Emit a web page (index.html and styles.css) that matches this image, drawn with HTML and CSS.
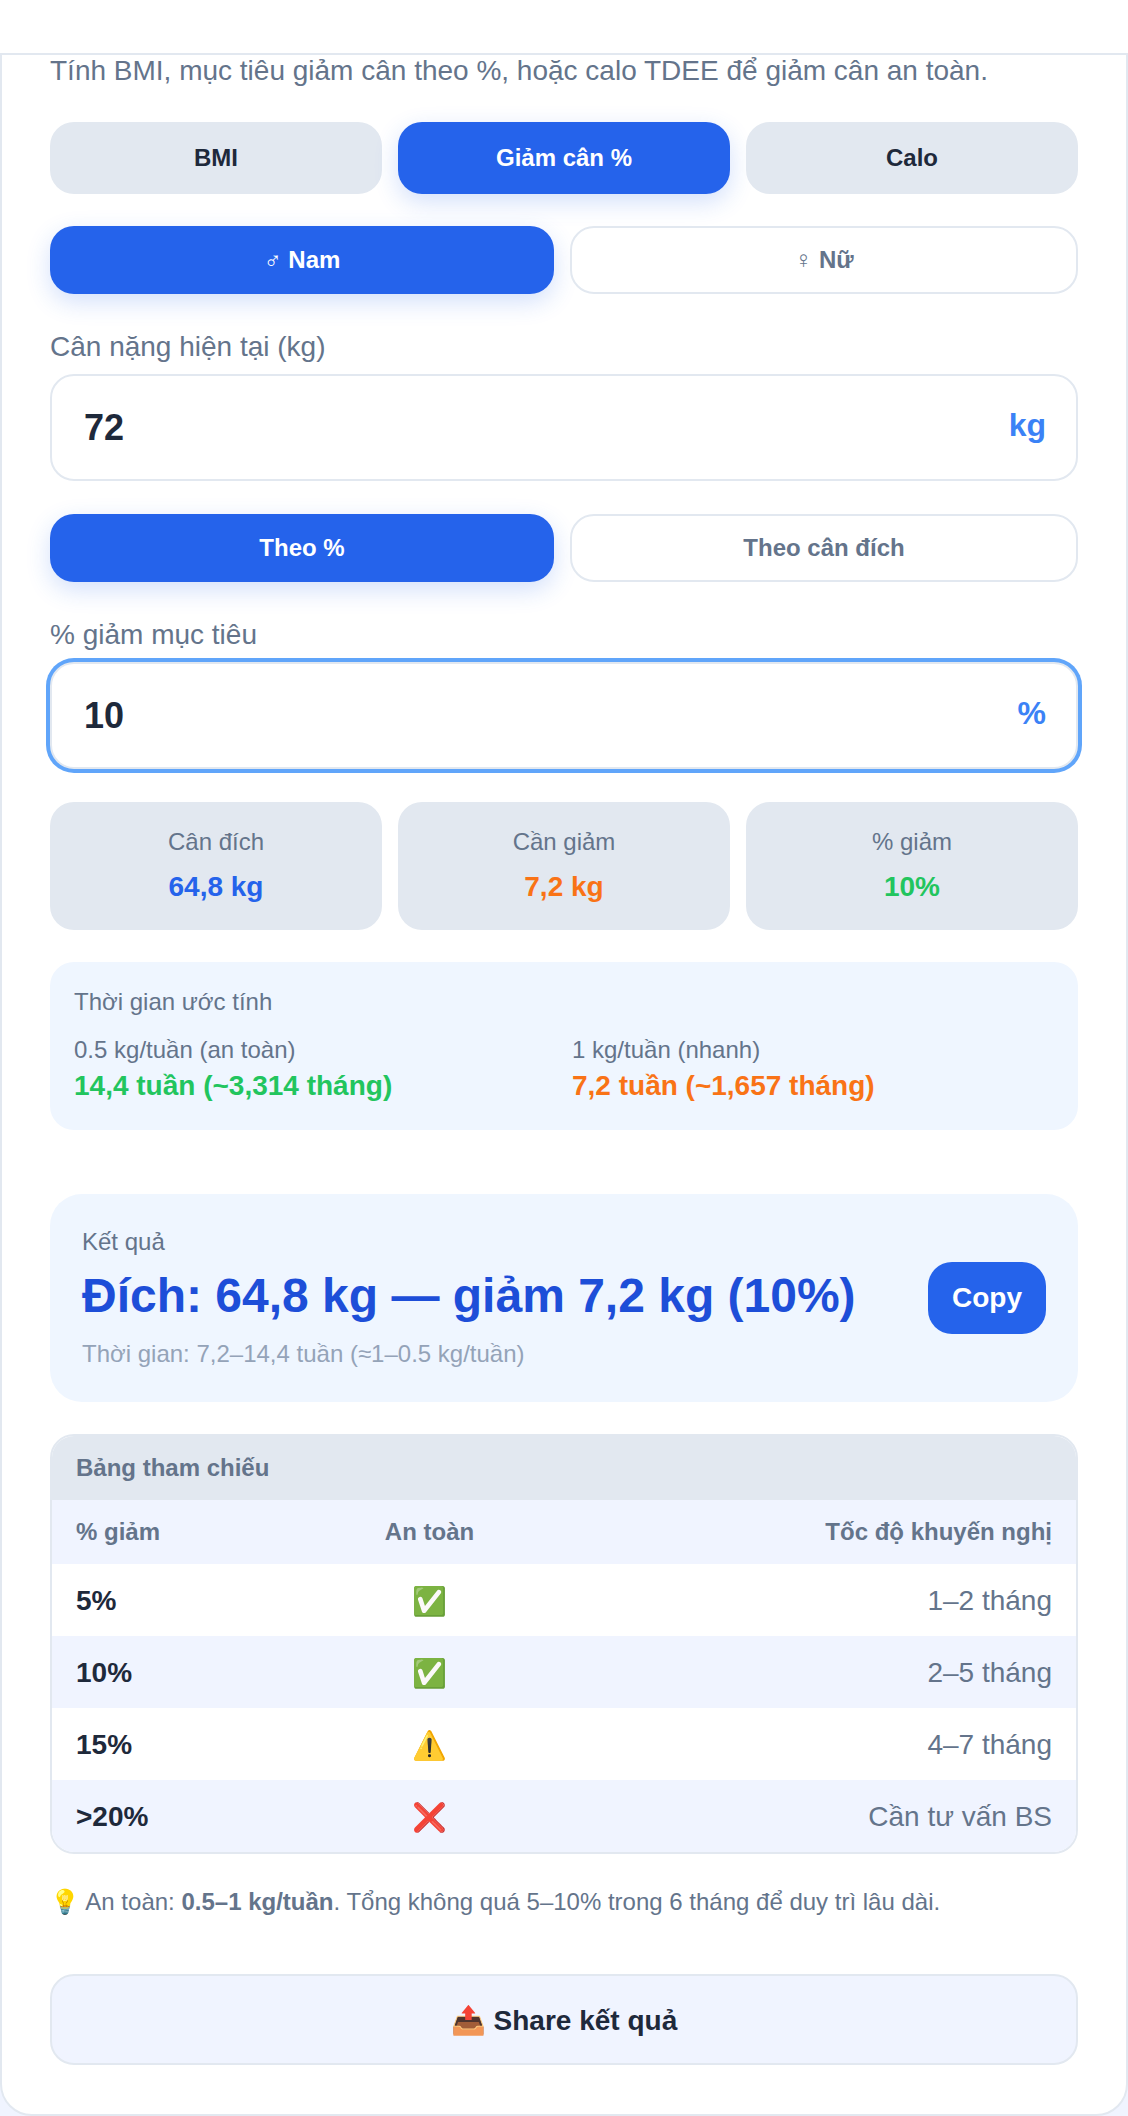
FILE: index.html
```html
<!DOCTYPE html>
<html lang="vi">
<head>
<meta charset="utf-8">
<title>Tính BMI</title>
<link rel="stylesheet" href="styles.css">
</head>
<body>
<div class="topbar"></div>
<main class="card">
  <p class="intro">Tính BMI, mục tiêu giảm cân theo %, hoặc calo TDEE để giảm cân an toàn.</p>
  <div class="tabs">
    <button class="tab">BMI</button>
    <button class="tab tab-active">Giảm cân %</button>
    <button class="tab">Calo</button>
  </div>
  <div class="toggle">
    <button class="opt opt-active">♂ Nam</button>
    <button class="opt">♀ Nữ</button>
  </div>
  <label class="label">Cân nặng hiện tại (kg)</label>
  <div class="field"><span class="value">72</span><span class="unit">kg</span></div>
  <div class="toggle toggle-second">
    <button class="opt opt-active">Theo %</button>
    <button class="opt">Theo cân đích</button>
  </div>
  <label class="label">% giảm mục tiêu</label>
  <div class="field field-focus"><span class="value">10</span><span class="unit">%</span></div>
  <div class="stats">
    <div class="stat"><div class="stat-label">Cân đích</div><div class="stat-value c-blue">64,8 kg</div></div>
    <div class="stat"><div class="stat-label">Cần giảm</div><div class="stat-value c-orange">7,2 kg</div></div>
    <div class="stat"><div class="stat-label">% giảm</div><div class="stat-value c-green">10%</div></div>
  </div>
  <section class="time">
    <div class="time-title">Thời gian ước tính</div>
    <div class="time-grid">
      <div><div class="time-label">0.5 kg/tuần (an toàn)</div><div class="time-value c-green">14,4 tuần (~3,314 tháng)</div></div>
      <div><div class="time-label">1 kg/tuần (nhanh)</div><div class="time-value c-orange">7,2 tuần (~1,657 tháng)</div></div>
    </div>
  </section>
  <section class="result">
    <div class="result-body">
      <div class="result-label">Kết quả</div>
      <div class="result-main">Đích: 64,8 kg — giảm 7,2 kg (10%)</div>
      <div class="result-sub">Thời gian: 7,2–14,4 tuần (≈1–0.5 kg/tuần)</div>
    </div>
    <button class="copy">Copy</button>
  </section>
  <section class="ref">
    <div class="ref-title">Bảng tham chiếu</div>
    <div class="row row-head"><span>% giảm</span><span>An toàn</span><span>Tốc độ khuyến nghị</span></div>
    <div class="row"><span>5%</span><span>✅</span><span>1–2 tháng</span></div>
    <div class="row row-alt"><span>10%</span><span>✅</span><span>2–5 tháng</span></div>
    <div class="row"><span>15%</span><span>⚠️</span><span>4–7 tháng</span></div>
    <div class="row row-alt"><span>&gt;20%</span><span>❌</span><span>Cần tư vấn BS</span></div>
  </section>
  <p class="note">💡 An toàn: <strong>0.5–1 kg/tuần</strong>. Tổng không quá 5–10% trong 6 tháng để duy trì lâu dài.</p>
  <button class="share">📤 Share kết quả</button>
</main>
</body>
</html>
```
FILE: styles.css
```css
* { box-sizing: border-box; }
html, body { margin: 0; padding: 0; background: #f0f4ff; }
body { font-family: "Liberation Sans", Arial, sans-serif; color: #1e293b; height: 2116px; overflow: hidden; }
button { font-family: inherit; cursor: pointer; }
.topbar { height: 53px; background: #fff; }
.card { background: #fff; border: 2px solid #e2e8f0; border-radius: 0 0 32px 32px; padding: 0 48px 48px; height: 2063px; }
.intro { margin: 0 0 35px; font-size: 28px; line-height: 32px; color: #64748b; }
.tabs { display: grid; grid-template-columns: repeat(3, 1fr); gap: 16px; margin-bottom: 32px; }
.tab { height: 72px; border: none; border-radius: 24px; background: #e2e8f0; color: #1e293b; font-size: 24px; font-weight: 700; }
.tab-active { background: #2563eb; color: #fff; box-shadow: 0 8px 24px rgba(37, 99, 235, .2); }
.toggle { display: flex; gap: 16px; margin-bottom: 36px; }
.toggle-second { margin-top: 33px; margin-bottom: 36px; }
.opt { flex: 1; height: 68px; padding: 0 20px; border: 2px solid #e2e8f0; border-radius: 24px; background: #fff; color: #64748b; font-size: 24px; font-weight: 700; }
.opt-active { border: none; background: #2563eb; color: #fff; box-shadow: 0 8px 24px rgba(37, 99, 235, .2); }
.label { display: block; font-size: 28px; line-height: 34px; color: #64748b; margin-bottom: 10px; }
.field { height: 107px; display: flex; align-items: center; justify-content: space-between; padding: 0 30px 0 32px; border: 2px solid #e2e8f0; border-radius: 24px; background: #fff; }
.field-focus { box-shadow: 0 0 0 4px #60a5fa; }
.value { font-size: 36px; font-weight: 700; color: #1e293b; }
.unit { font-size: 32px; font-weight: 700; color: #3b82f6; margin-top: -4px; }
.stats { display: grid; grid-template-columns: repeat(3, 1fr); gap: 16px; margin-top: 33px; }
.stat { height: 128px; padding-top: 25px; border-radius: 24px; background: #e2e8f0; text-align: center; }
.stat-label { font-size: 24px; line-height: 30px; color: #64748b; margin-bottom: 13px; }
.stat-value { font-size: 28px; line-height: 34px; font-weight: 700; }
.c-blue { color: #2563eb; }
.c-orange { color: #f97316; }
.c-green { color: #22c55e; }
.time { height: 168px; margin-top: 32px; padding: 25px 24px 24px; border-radius: 24px; background: #eff6ff; }
.time-title { font-size: 24px; line-height: 30px; color: #64748b; margin-bottom: 18px; }
.time-grid { display: grid; grid-template-columns: 1fr 1fr; gap: 0 16px; }
.time-label { font-size: 24px; line-height: 30px; color: #64748b; margin-bottom: 3px; }
.time-value { font-size: 28px; line-height: 36px; font-weight: 700; }
.result { height: 208px; margin-top: 64px; padding: 32px; display: flex; align-items: center; justify-content: space-between; border-radius: 32px; background: #eff6ff; }
.result-label { font-size: 24px; line-height: 30px; color: #64748b; }
.result-main { font-size: 48px; line-height: 60px; font-weight: 700; color: #1d4ed8; margin: 9px 0 13px; }
.result-sub { font-size: 24px; line-height: 30px; color: #94a3b8; }
.copy { width: 118px; height: 72px; border: none; border-radius: 24px; background: #2563eb; color: #fff; font-size: 28px; font-weight: 700; }
.ref { margin-top: 32px; border: 2px solid #e2e8f0; border-radius: 24px; overflow: hidden; height: 420px; }
.ref-title { height: 64px; padding-left: 24px; display: flex; align-items: center; background: #e2e8f0; color: #64748b; font-size: 24px; font-weight: 700; }
.row { display: grid; grid-template-columns: 291px 125px 1fr; align-items: center; height: 72px; padding: 2px 24px 0; font-size: 28px; color: #64748b; background: #fff; }
.row span:first-child { font-weight: 700; color: #1e293b; }
.row span:nth-child(2) { text-align: center; }
.row span:nth-child(3) { text-align: right; }
.row-head { height: 64px; padding-top: 0; font-size: 24px; font-weight: 700; background: #f0f4ff; }
.row-head span:first-child { color: #64748b; }
.row-alt { background: #f0f4ff; }
.note { margin: 31px 0 0; font-size: 24px; line-height: 34px; color: #64748b; }
.note strong { font-weight: 700; }
.share { display: block; width: 100%; height: 91px; margin-top: 55px; padding-top: 2px; border: 2px solid #e2e8f0; border-radius: 24px; background: #f0f4ff; color: #1e293b; font-size: 28px; font-weight: 700; }
```
